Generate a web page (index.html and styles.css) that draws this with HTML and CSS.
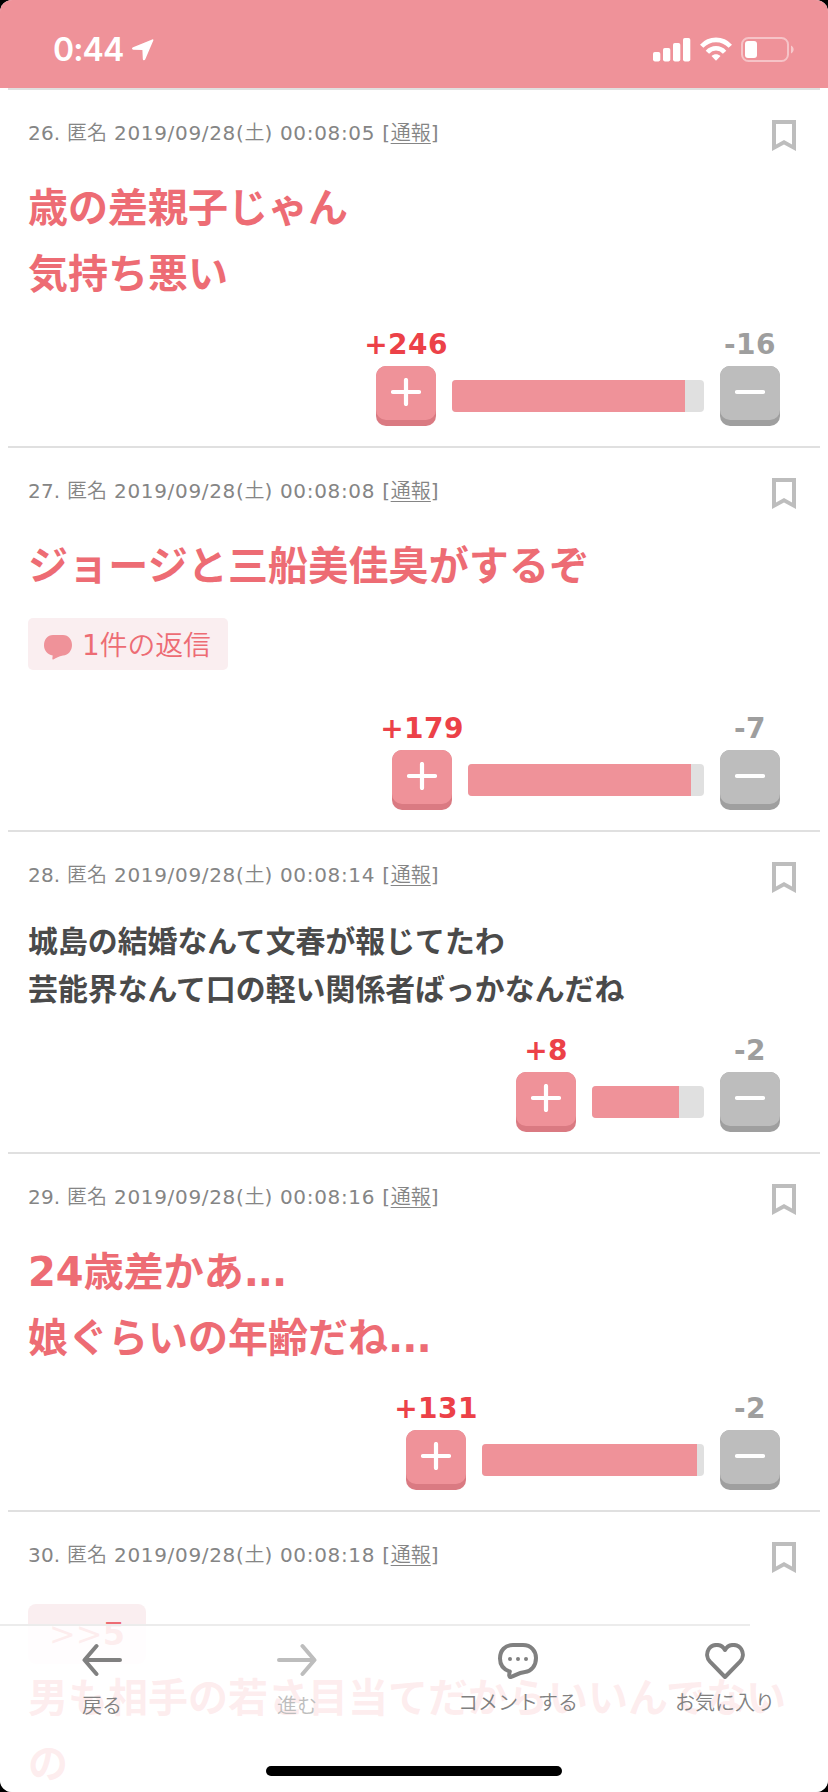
FILE: index.html
```
<!DOCTYPE html>
<html lang="ja">
<head>
<meta charset="utf-8">
<title>コメント一覧</title>
<link rel="stylesheet" href="styles.css">
</head>
<body>
<div class="screen">
  <svg class="defs" width="0" height="0">
    <symbol id="bookmark" viewBox="0 0 24 31"><path d="M0 0H24V31L12 24.5 0 31ZM4 4V24.6L12 20 20 24.6V4Z" fill="#bdbdbd" fill-rule="evenodd"/></symbol>
    <symbol id="plus" viewBox="0 0 30 28"><path d="M2 14H28M15 2V26" fill="none" stroke="#fff" stroke-width="4.200" stroke-linecap="round"/></symbol>
    <symbol id="minus" viewBox="0 0 30 28"><path d="M2 14H28" fill="none" stroke="#fff" stroke-width="4.200" stroke-linecap="round"/></symbol>
  </svg>
  <header class="status">
    <div class="status-left">
      <span class="time">0:44</span>
      <svg width="22" height="22" viewBox="0 0 22 22"><path d="M20.2.4 1.1 8.3C-.5 9-.2 10.6 1.3 10.7L10.4 11 10.8 20C10.9 21.5 12.6 21.8 13.3 20.3L21.3 1.6C21.7.6 21.1 0 20.2.4Z" fill="#fff"/></svg>
    </div>
    <div class="status-right">
      <svg width="38" height="24" viewBox="0 0 38 24" fill="#fff"><rect y="14" width="7.3" height="9.4" rx="1.8"/><rect x="10" y="10" width="7.3" height="13.4" rx="1.8"/><rect x="20" y="5" width="7.3" height="18.4" rx="1.8"/><rect x="30" width="7.3" height="23.4" rx="1.8"/></svg>
      <svg width="32" height="24" viewBox="0 0 32 24" fill="none" stroke="#fff" stroke-width="4.6"><path d="M1.7 9.2C9.5.8 22.500.8 30.300 9.200"/><path d="M7.400 15.200C12.200 10 19.800 10 24.600 15.200"/><path d="M11.500 19C14.200 16.600 17.800 16.600 20.500 19L16 23.700Z" fill="#fff" stroke="none"/></svg>
      <svg width="54" height="26" viewBox="0 0 54 26"><rect x="1" y="1" width="46" height="23" rx="6.500" fill="none" stroke="#fff" stroke-opacity=".45" stroke-width="2"/><rect x="4" y="4" width="12" height="17" rx="3" fill="#fff"/><path d="M50 8.500C53.500 10 53.500 15 50 16.500Z" fill="#fff" fill-opacity=".5"/></svg>
    </div>
  </header>

  <main class="posts">
    <article class="post">
      <div class="meta"><p><span class="no">26. </span>匿名<span class="num"> 2019/09/28(</span>土<span class="num">) 00:08:05 [</span><a>通報</a>]</p><svg width="24" height="31"><use href="#bookmark"/></svg></div>
      <p class="body hot">歳の差親子じゃん<br>気持ち悪い</p>
      <div class="votes">
        <div class="vote up"><b>+246</b><span class="btn"><svg width="30" height="28"><use href="#plus"/></svg></span></div>
        <div class="bar" style="width:252px"><i style="width:233px"></i></div>
        <div class="vote down"><b>-16</b><span class="btn"><svg width="30" height="28"><use href="#minus"/></svg></span></div>
      </div>
    </article>

    <article class="post">
      <div class="meta"><p><span class="no">27. </span>匿名<span class="num"> 2019/09/28(</span>土<span class="num">) 00:08:08 [</span><a>通報</a>]</p><svg width="24" height="31"><use href="#bookmark"/></svg></div>
      <p class="body hot kana">ジョージと三船美佳臭がするぞ</p>
      <div class="replies"><svg width="28" height="25" viewBox="0 0 28 25"><path d="M9 0H19C24.500 0 28 4.500 28 10C28 15.500 24.500 20 19 20.500C14.500 21 12.500 23 9.300 24.500C8.500 24.800 8.200 24 8.400 23L8.700 20.500C3.500 19.500 0 15.500 0 10.500C0 4.500 3.500 0 9 0Z" fill="#ef9299"/></svg><span>1件の返信</span></div>
      <div class="votes">
        <div class="vote up"><b>+179</b><span class="btn"><svg width="30" height="28"><use href="#plus"/></svg></span></div>
        <div class="bar" style="width:236px"><i style="width:223px"></i></div>
        <div class="vote down"><b>-7</b><span class="btn"><svg width="30" height="28"><use href="#minus"/></svg></span></div>
      </div>
    </article>

    <article class="post">
      <div class="meta"><p><span class="no">28. </span>匿名<span class="num"> 2019/09/28(</span>土<span class="num">) 00:08:14 [</span><a>通報</a>]</p><svg width="24" height="31"><use href="#bookmark"/></svg></div>
      <p class="body calm">城島の結婚なんて文春が報じてたわ<br>芸能界なんて口の軽い関係者ばっかなんだね</p>
      <div class="votes">
        <div class="vote up"><b>+8</b><span class="btn"><svg width="30" height="28"><use href="#plus"/></svg></span></div>
        <div class="bar" style="width:112px"><i style="width:87px"></i></div>
        <div class="vote down"><b>-2</b><span class="btn"><svg width="30" height="28"><use href="#minus"/></svg></span></div>
      </div>
    </article>

    <article class="post">
      <div class="meta"><p><span class="no">29. </span>匿名<span class="num"> 2019/09/28(</span>土<span class="num">) 00:08:16 [</span><a>通報</a>]</p><svg width="24" height="31"><use href="#bookmark"/></svg></div>
      <p class="body hot">24歳差かあ<span class="dots">...</span><br>娘ぐらいの年齢だね<span class="dots">...</span></p>
      <div class="votes">
        <div class="vote up"><b>+131</b><span class="btn"><svg width="30" height="28"><use href="#plus"/></svg></span></div>
        <div class="bar" style="width:222px"><i style="width:215px"></i></div>
        <div class="vote down"><b>-2</b><span class="btn"><svg width="30" height="28"><use href="#minus"/></svg></span></div>
      </div>
    </article>

    <article class="post last">
      <div class="meta"><p><span class="no">30. </span>匿名<span class="num"> 2019/09/28(</span>土<span class="num">) 00:08:18 [</span><a>通報</a>]</p><svg width="24" height="31"><use href="#bookmark"/></svg></div>
      <div class="anchor">&gt;&gt;<b>5</b></div>
      <p class="body hot">男も相手の若さ目当てだからいいんでない<br>の</p>
    </article>
  </main>

  <nav class="toolbar">
    <div class="tool back"><svg width="40" height="36" viewBox="0 0 40 36"><path d="M38 17H3M14.500 3 2.500 17 14.500 31" fill="none" stroke="#808080" stroke-width="4" stroke-linecap="round" stroke-linejoin="round"/></svg><span>戻る</span></div>
    <div class="tool next"><svg width="40" height="36" viewBox="0 0 40 36"><path d="M2 17H37M25.500 3 37.500 17 25.500 31" fill="none" stroke="#bdbdbd" stroke-width="4" stroke-linecap="round" stroke-linejoin="round"/></svg><span>進む</span></div>
    <div class="tool comment"><svg width="40" height="36" viewBox="0 0 40 36"><path d="M15 2H25C33 2 38 8 38 15C38 23 33 28.500 27 29C21 29.500 17 32.500 13 34C11 34.500 10.800 32 11.800 28.500C5.500 26.500 2 21.500 2 15.500C2 7.500 7 2 15 2Z" fill="none" stroke="#808080" stroke-width="4" stroke-linejoin="round"/><g fill="#808080"><circle cx="12" cy="16" r="2"/><circle cx="20" cy="16" r="2"/><circle cx="28" cy="16" r="2"/></g></svg><span>コメントする</span></div>
    <div class="tool fav"><svg width="40" height="36" viewBox="0 0 40 36"><path d="M20 7C16.500.3 7.500.5 3.800 6C1 10.500 2 15.500 5 18.700L20 34 35 18.700C38 15.500 39 10.500 36.200 6C32.500.5 23.500.3 20 7Z" fill="none" stroke="#808080" stroke-width="4" stroke-linejoin="round"/></svg><span>お気に入り</span></div>
    <i class="rule"></i>
    <i class="home"></i>
  </nav>
</div>
</body>
</html>
```
FILE: styles.css
```
* { box-sizing: border-box; margin: 0; padding: 0; }
html, body { width: 828px; height: 1792px; overflow: hidden; background: #000; }
body { font-family: "DejaVu Sans", "Noto Sans CJK JP DemiLight", "Noto Sans CJK JP Light", "Noto Sans CJK JP", sans-serif; }
svg { display: block; flex: none; }
.defs { position: absolute; }
.screen { position: relative; width: 828px; height: 1792px; overflow: hidden; border-radius: 12px; background: #fff; }

.status { display: flex; justify-content: space-between; height: 88px; padding: 0 33px 0 53px; background: #ef9299; }
.status-left { display: flex; gap: 9px; padding-top: 39px; }
.time { width: 70px; height: 22px; font: 600 32px/22px Inter, sans-serif; letter-spacing: -.9px; color: #fff; white-space: nowrap; }
.status-right { display: flex; gap: 9px; padding-top: 37px; }
.status-right svg:first-child { margin-top: 1px; }

.posts { padding: 0 8px; }
.post { display: flex; flex-direction: column; height: 358px; padding: 30px 40px 20px 20px; border-top: 2px solid #e0e0e0; }
.post:nth-child(2) { height: 384px; }
.post:nth-child(3) { height: 322px; }
.meta { display: flex; justify-content: space-between; align-items: flex-start; height: 31px; margin-right: -16px; }
.meta p { height: 26px; font-size: 20px; line-height: 26px; color: #858585; white-space: nowrap; }
.no { letter-spacing: .2px; white-space: pre; }
.num { letter-spacing: .67px; white-space: pre; }
.meta a { letter-spacing: .1px; text-decoration: underline; text-decoration-thickness: 1px; text-underline-offset: 3px; }
.body { font-family: "DejaVu Sans", "Noto Sans CJK JP", sans-serif; font-weight: 700; white-space: nowrap; }
.hot { margin-top: 24px; font-size: 40px; line-height: 66px; color: #ed6c74; }
.kana { letter-spacing: .15px; }
.calm { margin-top: 25px; margin-bottom: -1px; font-size: 29.9px; line-height: 48px; color: #4a4a4a; }
.dots { letter-spacing: -1px; }

.votes { display: flex; justify-content: flex-end; align-items: flex-end; gap: 16px; margin-top: auto; }
.vote { display: flex; flex-direction: column; align-items: center; width: 60px; }
.vote b { height: 30px; margin-bottom: 6px; font-size: 28px; line-height: 30px; letter-spacing: .4px; white-space: nowrap; }
.up b { color: #ec4148; }
.down b { color: #9e9e9e; }
.btn { position: relative; z-index: 0; display: flex; justify-content: center; width: 60px; height: 60px; padding-top: 12px; border-radius: 10px; background: #da7a82; }
.btn::before { content: ""; position: absolute; z-index: -1; inset: 0 0 6px; border-radius: 10px; background: #ef9299; }
.down .btn { background: #9f9f9f; }
.down .btn::before { background: #bdbdbd; }
.bar { height: 32px; margin-bottom: 14px; border-radius: 4px; background: #e0e0e0; overflow: hidden; }
.bar i { display: block; height: 32px; background: #ef9299; }

.replies { display: flex; align-items: center; gap: 10px; width: 200px; height: 52px; margin-top: 19px; padding: 4px 16px 0; border-radius: 5px; background: #faeef0; font-size: 27.8px; line-height: 48px; color: #ed6c74; white-space: nowrap; }
.replies svg { margin-top: 2px; }

.last { height: 282px; padding-bottom: 0; }
.anchor { width: 118px; height: 60px; margin-top: 31px; border-radius: 8px; background: #faeef0; font-size: 32px; line-height: 60px; text-align: center; color: #ed6c74; }
.last .hot { margin-top: 1px; }

.toolbar { position: absolute; left: 0; right: 0; bottom: 0; height: 168px; background: rgba(255,255,255,.88); display: flex; padding-top: 19px; }
.tool { display: flex; flex-direction: column; align-items: center; gap: 9px; font-size: 20px; line-height: 30px; color: #808080; white-space: nowrap; }
.back { width: 204px; }
.next { width: 186px; color: #bdbdbd; }
.comment { width: 256px; }
.fav { width: 158px; }
.back, .next { gap: 12px; }
.rule { position: absolute; left: 0; top: 0; width: 750px; height: 2px; background: #ececec; }
.home { position: absolute; left: 266px; top: 142px; width: 296px; height: 10px; border-radius: 5px; background: #000; }
```
